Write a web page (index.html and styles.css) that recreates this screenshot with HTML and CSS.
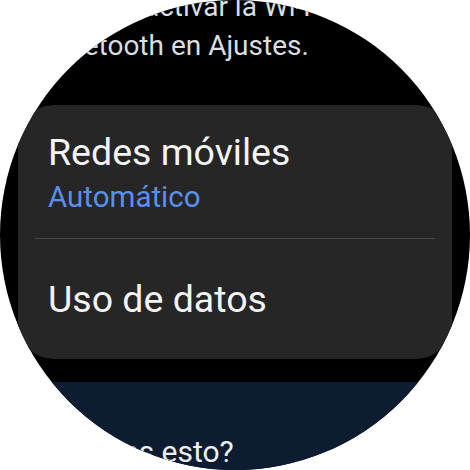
FILE: index.html
```html
<!DOCTYPE html>
<html lang="es">
<head>
<meta charset="utf-8">
<link rel="stylesheet" href="styles.css">
</head>
<body>
<div class="watch">
  <div class="screen">
    <p class="intro">Puedes activar la Wi-Fi y el Bluetooth en Ajustes.</p>
    <div class="card">
      <div class="item first">
        <div class="title">Redes móviles</div>
        <div class="sub">Automático</div>
      </div>
      <div class="divider"></div>
      <div class="item">
        <div class="title">Uso de datos</div>
      </div>
    </div>
    <div class="info">
      <div class="info-title">¿Qué es esto?</div>
    </div>
  </div>
</div>
</body>
</html>
```

FILE: styles.css
```css
html, body {
  margin: 0;
  padding: 0;
  background: #ffffff;
}
.watch {
  width: 470px;
  height: 470px;
  border-radius: 50%;
  overflow: hidden;
  background: #000000;
  font-family: Roboto, "Noto Sans", sans-serif;
}
.screen {
  margin-top: -13px;
  display: flex;
  flex-direction: column;
}
.intro {
  margin: 0;
  padding: 0 0 0 44px;
  color: #d9dee3;
  font-size: 28px;
  line-height: 39px;
  width: 390px;
}
.card {
  margin: 40px 18px 0 18px;
  background: #262626;
  border-radius: 36px;
  display: flex;
  flex-direction: column;
}
.item {
  padding: 38px 30px 38px 30px;
  display: flex;
  flex-direction: column;
}
.item.first {
  padding: 25px 30px 24px 30px;
  gap: 6px;
}
.title {
  color: #f4f4f4;
  font-size: 37.5px;
  line-height: 44px;
}
.sub {
  color: #5b8fee;
  font-size: 29.5px;
  line-height: 34px;
}
.divider {
  height: 1px;
  margin: 0 17px;
  background: #4a4646;
}
.info {
  margin: 23px 18px 0 18px;
  background: #0d1c31;
  border-radius: 36px 36px 0 0;
  padding: 51px 30px 40px 30px;
}
.info-title {
  color: #eef0f3;
  font-size: 30px;
  line-height: 38px;
}
```
